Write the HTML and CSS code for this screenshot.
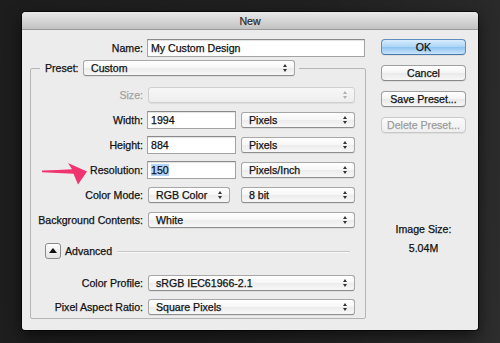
FILE: index.html
```html
<!DOCTYPE html>
<html>
<head>
    <title>New</title>
    <link rel="stylesheet" href="styles.css">
</head>
<body>
    <div class="window">
        <div class="titlebar">New</div>
        <div class="window-body">
            <div class="form">
                <div class="name-row">
                    <span class="label">Name:</span>
                    <div class="field field-name">My Custom Design</div>
                </div>

                <fieldset class="preset-box">
                    <legend class="preset-legend">
                        <span class="legend-label">Preset:</span>
                        <div class="popup popup-preset">Custom</div>
                    </legend>

                    <div class="row">
                        <span class="label disabled">Size:</span>
                        <div class="popup popup-wide is-disabled"></div>
                    </div>
                    <div class="row">
                        <span class="label">Width:</span>
                        <div class="field field-num">1994</div>
                        <div class="popup popup-unit">Pixels</div>
                    </div>
                    <div class="row">
                        <span class="label">Height:</span>
                        <div class="field field-num">884</div>
                        <div class="popup popup-unit">Pixels</div>
                    </div>
                    <div class="row">
                        <span class="label">Resolution:</span>
                        <div class="field field-num"><span class="selected">150</span></div>
                        <div class="popup popup-unit">Pixels/Inch</div>
                    </div>
                    <div class="row">
                        <span class="label">Color Mode:</span>
                        <div class="popup popup-mode">RGB Color</div>
                        <div class="popup popup-bits">8 bit</div>
                    </div>
                    <div class="row">
                        <span class="label">Background Contents:</span>
                        <div class="popup popup-wide">White</div>
                    </div>

                    <div class="advanced">
                        <div class="disclosure"></div>
                        <span class="advanced-label">Advanced</span>
                        <div class="separator"></div>
                    </div>

                    <div class="row row-profile">
                        <span class="label">Color Profile:</span>
                        <div class="popup popup-wide">sRGB IEC61966-2.1</div>
                    </div>
                    <div class="row row-last">
                        <span class="label">Pixel Aspect Ratio:</span>
                        <div class="popup popup-wide">Square Pixels</div>
                    </div>
                </fieldset>
            </div>

            <div class="side">
                <div class="btn btn-default">OK</div>
                <div class="btn">Cancel</div>
                <div class="btn">Save Preset...</div>
                <div class="btn is-disabled">Delete Preset...</div>
                <div class="image-size">
                    <div class="image-size-label">Image Size:</div>
                    <div class="image-size-value">5.04M</div>
                </div>
            </div>
        </div>

        <!-- annotation arrow pointing at Resolution -->
        <svg class="arrow" width="46" height="22" viewBox="0 0 46 22">
            <path d="M0,7.6 Q16,6.8 30,6.2 L26,0 L45,8.6 L36,21.5 L31.5,10.8 Q16,9.8 0,9.2 Z" fill="#ef3470"/>
        </svg>
    </div>
</body>
</html>
```

FILE: styles.css
```css
body {
    margin: 0;
    width: 500px;
    height: 343px;
    box-sizing: border-box;
    padding: 12px 0 0 22px;
    overflow: hidden;
    background: linear-gradient(100deg, #1d1d1d 0%, #202020 55%, #2d2d2d 100%);
    font-family: "Liberation Sans", Arial, sans-serif;
    font-size: 10.6px;
    color: #111;
    -webkit-text-stroke: 0.25px currentColor;
}

.window {
    position: relative;
    width: 456px;
    height: 318px;
    background: #ececec;
    border-radius: 4px 4px 3px 3px;
    box-shadow: 0 0 0 1px rgba(0, 0, 0, 0.6), 0 6px 16px rgba(0, 0, 0, 0.6);
}

.titlebar {
    height: 17px;
    line-height: 18px;
    text-align: center;
    color: #2a2a2a;
    text-shadow: 0 1px 0 rgba(255, 255, 255, 0.6);
    background: linear-gradient(#e9e9e9, #c2c2c2);
    border-bottom: 1px solid #9a9a9a;
    border-radius: 4px 4px 0 0;
}

.window-body { display: flex; }

.form {
    width: 344px;
    box-sizing: border-box;
    padding: 9px 0 0 8px;
}

.label { flex: none; text-align: right; white-space: nowrap; }
.label.disabled { color: #a3a3a3; }

.name-row { display: flex; align-items: center; height: 18px; }
.name-row .label { width: 113px; margin-right: 4px; }

.field {
    height: 18px;
    box-sizing: border-box;
    padding-left: 3px;
    line-height: 16px;
    background: #fff;
    border: 1px solid #a3a3a3;
    border-top-color: #8a8a8a;
    box-shadow: inset 0 1px 1px rgba(0, 0, 0, 0.12);
    white-space: nowrap;
}
.field-name { width: 218px; }
.field-num { width: 89px; }
.selected { background: #b4d5fb; }

.popup {
    position: relative;
    flex: none;
    height: 16px;
    box-sizing: border-box;
    padding-left: 7px;
    line-height: 14px;
    background: linear-gradient(#ffffff, #f6f6f6 50%, #ececec 51%, #f7f7f7);
    border: 1px solid #a7a7a7;
    border-bottom-color: #8e8e8e;
    border-radius: 3px;
    box-shadow: 0 1px 0 rgba(0, 0, 0, 0.06);
    white-space: nowrap;
}
.popup::before,
.popup::after {
    content: "";
    position: absolute;
    right: 7px;
    border-left: 2px solid transparent;
    border-right: 2px solid transparent;
}
.popup::before { top: 3px; border-bottom: 3px solid #333; }
.popup::after { top: 8px; border-top: 3px solid #333; }
.popup.is-disabled {
    border-color: #cfcfcf;
    background: linear-gradient(#f7f7f7, #eeeeee);
}
.popup.is-disabled::before { border-bottom-color: #b0b0b0; }
.popup.is-disabled::after { border-top-color: #b0b0b0; }

.popup-preset { width: 212px; }
.popup-wide { width: 207px; margin-left: 1px; }
.popup-unit { width: 114px; margin-left: 5px; }
.popup-mode { width: 82px; margin-left: 1px; }
.popup-bits { width: 114px; margin-left: 11px; }

.preset-box {
    margin: 3px 0 0;
    padding: 6px 0 0;
    min-width: 0;
    border: 1px solid #b5b5b5;
    border-radius: 2px;
}

.preset-legend {
    display: flex;
    align-items: center;
    margin-left: 9px;
    padding: 0 4px 0 5px;
}
.legend-label { width: 38px; }

.row { display: flex; align-items: center; height: 25px; }
.row .label { width: 112px; margin-right: 4px; }
.row-profile { margin-top: 6px; }
.row-last { height: 23px; }

.advanced {
    display: flex;
    align-items: center;
    height: 26px;
    margin-top: 6px;
    padding-left: 14px;
}
.disclosure {
    position: relative;
    width: 16px;
    height: 16px;
    box-sizing: border-box;
    border: 1px solid #8a8a8a;
    border-radius: 3px;
    background: linear-gradient(#fdfdfd, #e4e4e4);
}
.disclosure::after {
    content: "";
    position: absolute;
    left: 3px;
    top: 4px;
    border-left: 4px solid transparent;
    border-right: 4px solid transparent;
    border-bottom: 5px solid #111;
}
.advanced-label { margin-left: 4px; }
.separator {
    flex: 1;
    height: 1px;
    margin: 0 15px 0 5px;
    background: #c6c6c6;
    box-shadow: 0 1px 0 #f8f8f8;
}

.side {
    width: 112px;
    box-sizing: border-box;
    padding: 9px 0 0 15px;
    display: flex;
    flex-direction: column;
}

.btn {
    width: 85px;
    height: 16px;
    box-sizing: border-box;
    line-height: 14px;
    text-align: center;
    background: linear-gradient(#ffffff, #f4f4f4 50%, #e9e9e9 51%, #f7f7f7);
    border: 1px solid #9f9f9f;
    border-bottom-color: #888;
    border-radius: 4px;
    box-shadow: 0 1px 0 rgba(0, 0, 0, 0.06);
}
.btn + .btn { margin-top: 10px; }
.btn-default {
    background: linear-gradient(#d9edfc, #abd3f6 50%, #8ec3f1 51%, #c8e4fa);
    border-color: #5f8dc0;
    border-bottom-color: #4a78ab;
}
.btn.is-disabled {
    color: #9d9d9d;
    border-color: #c9c9c9;
    background: linear-gradient(#fafafa, #efefef);
}

.image-size {
    width: 85px;
    margin-top: 90px;
    text-align: center;
    line-height: 13px;
}
.image-size-value { margin-top: 6px; }

.arrow {
    position: absolute;
    left: 20px;
    top: 151px;
}
```
